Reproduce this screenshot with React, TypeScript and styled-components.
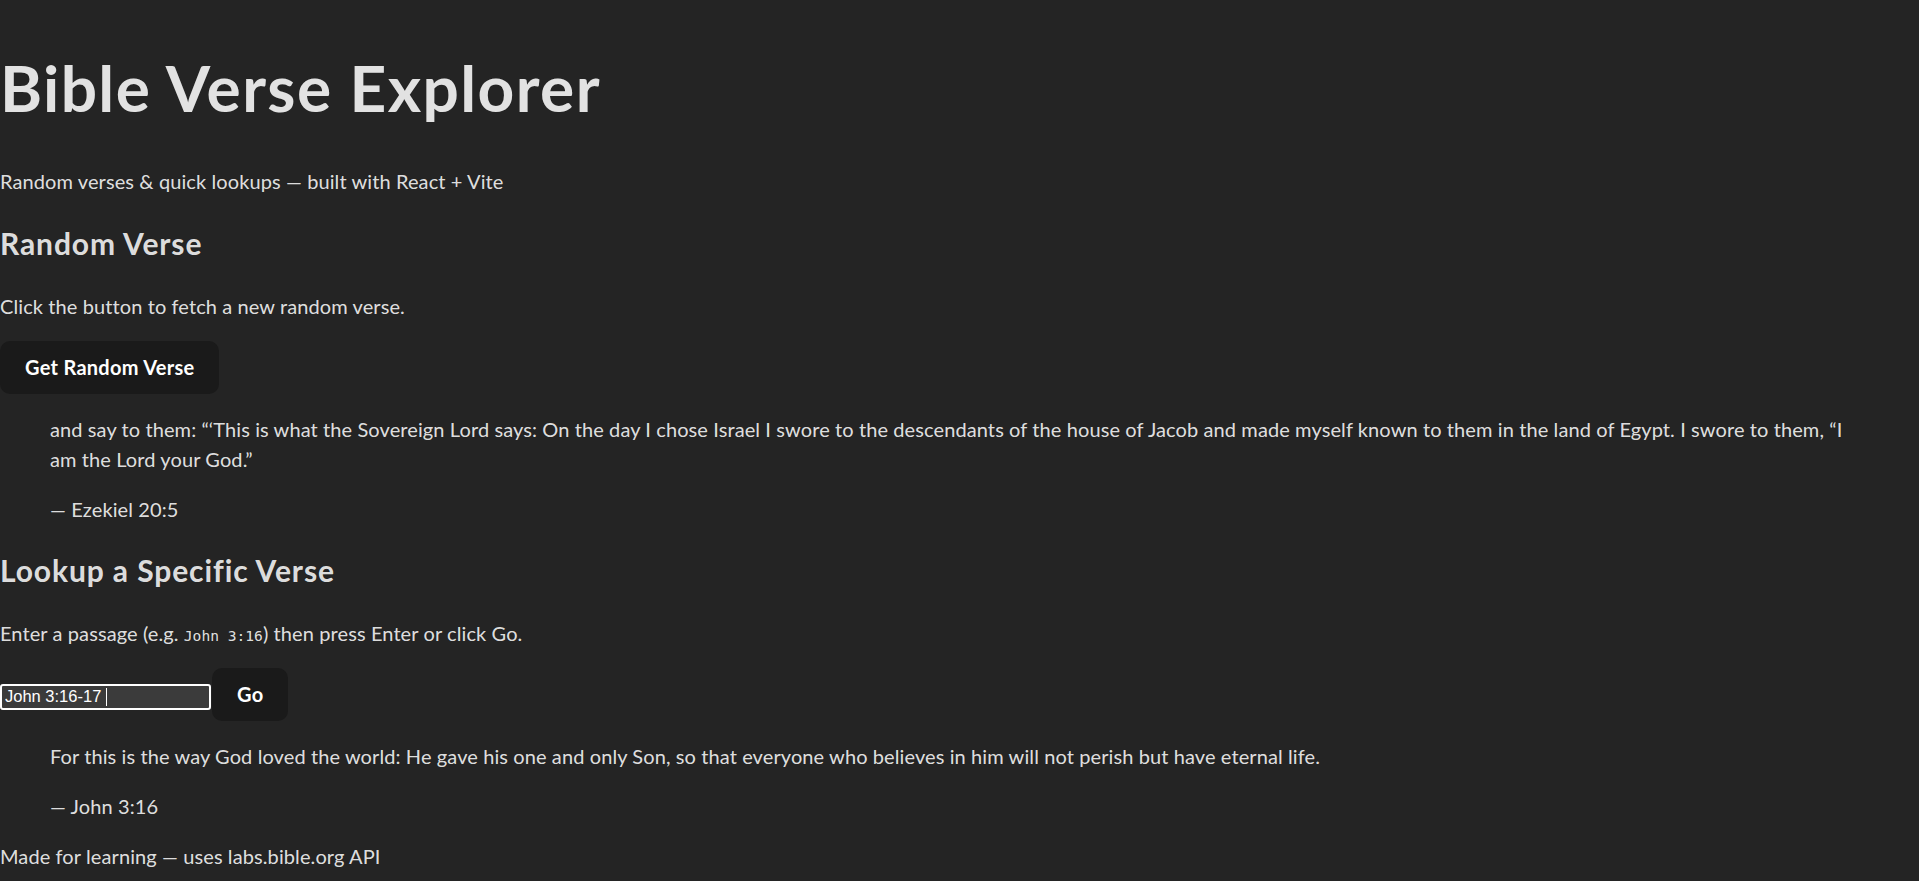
import React, { useEffect, useRef } from "react";
import styled, { createGlobalStyle } from "styled-components";

const Global = createGlobalStyle`
  html, body { margin: 0; padding: 0; overflow: hidden; }
  body {
    background: #242424;
    color: rgba(255, 255, 255, 0.87);
    font-family: Lato, "Noto Sans", sans-serif;
    font-size: 20px;
    line-height: 1.5;
    font-weight: 400;
    letter-spacing: 0.005em;
    color-scheme: dark;
    -webkit-font-smoothing: antialiased;
  }
`;

const Page = styled.main`
  display: block;
  padding-top: 10px;
`;

const Title = styled.h1`
  font-size: 64px;
  line-height: 1.1;
  font-weight: 700;
  letter-spacing: 0.022em;
  margin: 42.9px 0;
`;

const Text = styled.p`
  margin: 20px 0;
`;

const Heading = styled.h2`
  font-size: 30px;
  line-height: 1.5;
  font-weight: 700;
  letter-spacing: 0.03em;
  margin: 24.9px 0;
`;

const Button = styled.button`
  border-radius: 10px;
  border: 1px solid transparent;
  padding: 12px 24px;
  font-size: 20px;
  line-height: 1.33;
  font-weight: 700;
  letter-spacing: 0.014em;
  font-family: inherit;
  background: #1a1a1a;
  color: #ffffff;
  cursor: pointer;
`;

const Quote = styled.blockquote`
  margin: 20px 50px;
`;

const Row = styled.div`
  display: flex;
  align-items: baseline;
  gap: 1px;
`;

const Field = styled.div`
  position: relative;
  display: inline-flex;
`;

const Input = styled.input`
  box-sizing: border-box;
  width: 211px;
  height: 26px;
  padding: 1px 3px;
  border: 2px solid #ffffff;
  border-radius: 3px;
  background: #3b3b3b;
  color: #ffffff;
  font-family: "Liberation Sans", Arial, sans-serif;
  font-size: 16.5px;
  letter-spacing: 0;
  outline: none;
  caret-color: transparent;
`;

const Caret = styled.span`
  position: absolute;
  left: 106px;
  top: 4px;
  width: 1px;
  height: 18px;
  background: #ffffff;
  pointer-events: none;
`;

const Code = styled.code`
  font-family: "DejaVu Sans Mono", monospace;
  font-size: 14.6px;
  letter-spacing: 0;
`;

export default function App() {
  const ref = useRef<HTMLInputElement>(null);
  useEffect(() => {
    const el = ref.current;
    if (el) {
      el.focus();
      const n = el.value.length;
      el.setSelectionRange(n, n);
    }
  }, []);
  return (
    <>
      <Global />
      <Page>
        <Title>Bible Verse Explorer</Title>
        <Text>Random verses &amp; quick lookups — built with React + Vite</Text>

        <section>
          <Heading>Random Verse</Heading>
          <Text>Click the button to fetch a new random verse.</Text>
          <div>
            <Button>Get Random Verse</Button>
          </div>
          <Quote>
            <Text>
              and say to them: “‘This is what the Sovereign Lord says: On the day I chose Israel I swore to the
              descendants of the house of Jacob and made myself known to them in the land of Egypt. I swore to them,
              “I am the Lord your God.”
            </Text>
            <Text>— Ezekiel 20:5</Text>
          </Quote>
        </section>

        <section>
          <Heading>Lookup a Specific Verse</Heading>
          <Text>
            Enter a passage (e.g. <Code>John 3:16</Code>) then press Enter or click Go.
          </Text>
          <Row>
            <Field>
              <Input ref={ref} defaultValue="John 3:16-17 " />
              <Caret />
            </Field>
            <Button>Go</Button>
          </Row>
          <Quote>
            <Text>
              For this is the way God loved the world: He gave his one and only Son, so that everyone who believes in
              him will not perish but have eternal life.
            </Text>
            <Text>— John 3:16</Text>
          </Quote>
        </section>

        <Text>Made for learning — uses labs.bible.org API</Text>
      </Page>
    </>
  );
}
